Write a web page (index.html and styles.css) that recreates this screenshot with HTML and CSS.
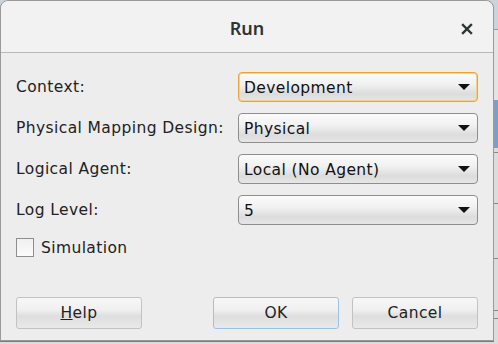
FILE: index.html
```html
<!DOCTYPE html>
<html>
<head>
<meta charset="utf-8">
<link rel="stylesheet" href="styles.css">
</head>
<body>
<div class="dialog">
  <div class="titlebar">
    <span class="title">Run</span>
    <span class="close">
      <svg width="12" height="12" viewBox="0 0 12 12"><path d="M2 2 L10 10 M10 2 L2 10" stroke="#2e3436" stroke-width="2.4" stroke-linecap="square"/></svg>
    </span>
  </div>
  <div class="content">
    <div class="form">
      <label class="lbl">Context:</label>
      <div class="combo focus"><span>Development</span><i class="arrow"></i></div>
      <label class="lbl">Physical Mapping Design:</label>
      <div class="combo"><span>Physical</span><i class="arrow"></i></div>
      <label class="lbl">Logical Agent:</label>
      <div class="combo"><span>Local (No Agent)</span><i class="arrow"></i></div>
      <label class="lbl">Log Level:</label>
      <div class="combo"><span>5</span><i class="arrow"></i></div>
    </div>
    <div class="check"><span class="box"></span><span>Simulation</span></div>
    <div class="buttons">
      <button class="btn"><u>H</u>elp</button>
      <div class="spacer"></div>
      <button class="btn ok">OK</button>
      <button class="btn">Cancel</button>
    </div>
  </div>
</div>
</body>
</html>
```
FILE: styles.css
```css
html, body {
  margin: 0;
  padding: 0;
}
body {
  width: 498px;
  height: 344px;
  background:
    linear-gradient(to bottom,
      #cdd3db 0, #cdd3db 29px, #9a9a9a 29px, #9a9a9a 30px,
      #e4e4e4 30px, #e4e4e4 100px,
      #819dbf 100px, #819dbf 148px,
      #dcdcdc 148px, #dcdcdc 152px, #888 152px, #888 153px,
      #dcdcdc 153px, #dcdcdc 203px, #888 203px, #888 204px,
      #dcdcdc 204px, #dcdcdc 258px, #888 258px, #888 259px,
      #dcdcdc 259px, #dcdcdc 310px, #888 310px, #888 311px,
      #dcdcdc 311px, #dcdcdc 318px, #888 318px, #888 319px,
      #dcdcdc 319px);
  font-family: "DejaVu Sans", sans-serif;
  color: #2e3436;
  overflow: hidden;
}
.dialog {
  width: 494px;
  height: 341px;
  box-sizing: border-box;
  border: 1px solid #9a9a9a;
  border-radius: 8px 8px 0 0;
  background: #ededed;
  display: flex;
  flex-direction: column;
  box-shadow: 0 1px 0 #7a7a7a;
}
.titlebar {
  height: 52px;
  flex: none;
  box-sizing: border-box;
  border-bottom: 1px solid #b8b8b8;
  background: #f2f2f2;
  border-radius: 8px 8px 0 0;
  display: flex;
  align-items: center;
  justify-content: center;
  position: relative;
}
.title {
  font-family: "Noto Sans", sans-serif;
  font-weight: 600;
  font-size: 18px;
  color: #2e3436;
  margin-top: 3px;
}
.close {
  position: absolute;
  right: 20px;
  top: 22px;
  width: 12px;
  height: 12px;
  display: flex;
}
.content {
  padding: 19px 15px 0 15px;
  display: flex;
  flex-direction: column;
  flex: 1;
}
.form {
  display: grid;
  grid-template-columns: 222px 240px;
  row-gap: 11px;
  align-items: center;
}
.lbl {
  font-size: 15.5px;
  letter-spacing: 0.4px;
  color: #222;
}
.combo {
  height: 30px;
  box-sizing: border-box;
  border: 1px solid #8e8e8e;
  border-radius: 4px;
  background: linear-gradient(to bottom, #fbfbfb 0%, #f1f1f1 40%, #dcdcdc 75%, #e6e6e6 100%);
  display: flex;
  align-items: center;
  padding: 0 7px 0 5px;
  font-size: 15.5px;
  letter-spacing: 0.4px;
  color: #111;
}
.combo.focus {
  border: 1px solid #e8a33a;
  box-shadow: inset 0 0 0 1px #f6cf8a;
}
.combo span {
  flex: 1;
  padding-top: 1px;
}
.arrow {
  width: 0;
  height: 0;
  border-left: 6px solid transparent;
  border-right: 6px solid transparent;
  border-top: 6px solid #111;
}
.check {
  margin-top: 13px;
  display: flex;
  align-items: center;
  gap: 7px;
  font-size: 15.5px;
  letter-spacing: 0.4px;
  color: #222;
}
.box {
  width: 16px;
  height: 17px;
  border: 1px solid #8e8e8e;
  background: linear-gradient(to bottom, #f0f0f0, #fbfbfb);
}
.buttons {
  margin-top: 40px;
  display: flex;
  align-items: center;
  gap: 13px;
}
.spacer {
  width: 58px;
}
.btn {
  width: 126px;
  height: 32px;
  box-sizing: border-box;
  border: 1px solid #c2c2c2;
  border-radius: 3px;
  background: linear-gradient(to bottom, #f7f7f7 0%, #f0f0f0 40%, #dedede 60%, #e9e9e9 100%);
  font-family: "DejaVu Sans", sans-serif;
  font-size: 15.5px;
  letter-spacing: 0.4px;
  color: #222;
  padding: 0;
}
.btn:first-child {
  margin-right: -13px;
}
.btn.ok {
  border-color: #9cc1e8;
}
```
